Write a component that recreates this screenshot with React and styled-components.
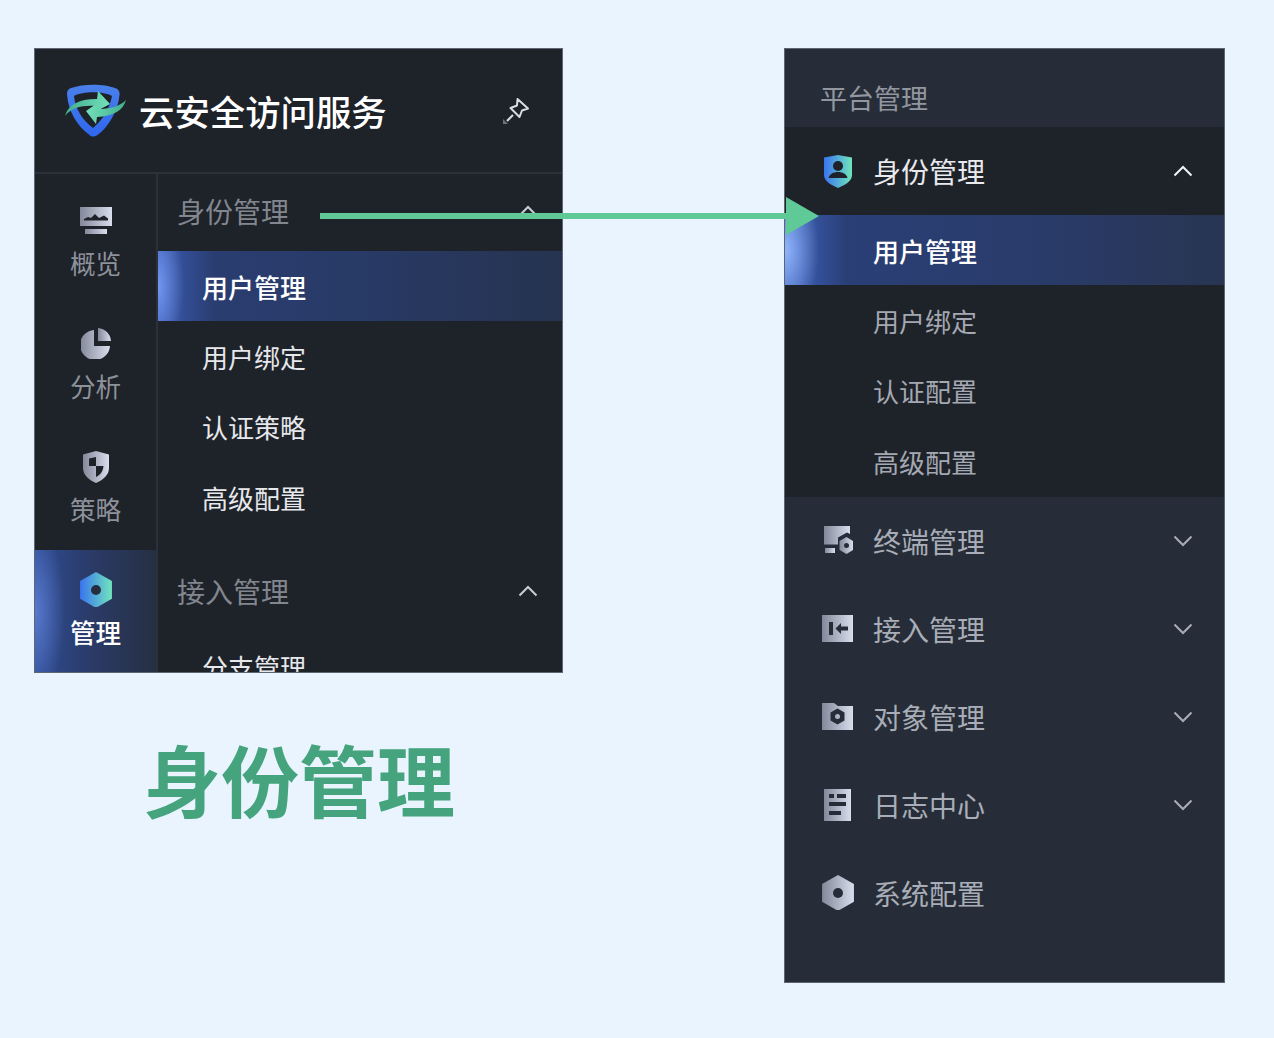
import React from 'react';
import styled, { createGlobalStyle } from 'styled-components';

const GlobalStyle = createGlobalStyle`
  html, body { margin: 0; padding: 0; }
  body {
    background: #e9f4ff;
    font-family: "Noto Sans CJK SC", "Noto Sans", sans-serif;
  }
`;

const Page = styled.div`
  position: relative;
  width: 1274px;
  height: 1038px;
  padding: 48px 49px 0 34px;
  box-sizing: border-box;
  display: flex;
  justify-content: space-between;
  align-items: flex-start;
  overflow: hidden;
  background: #e9f4ff;
`;

const LeftColumn = styled.div`
  width: 529px;
  display: flex;
  flex-direction: column;
`;

const Panel = styled.div`
  height: 625px;
  box-sizing: border-box;
  border: 1px solid #5d6672;
  background: #1e2229;
  display: flex;
  flex-direction: column;
  overflow: hidden;
`;

const Brand = styled.div`
  height: 123px;
  flex: none;
  display: flex;
  align-items: center;
  padding: 0 32px 0 30px;
  border-bottom: 2px solid #2b303b;
`;

const BrandName = styled.div`
  margin-left: 12px;
  margin-top: 0;
  flex: 1;
  font-size: 35.4px;
  line-height: 48px;
  font-weight: 500;
  color: #fff;
  white-space: nowrap;
`;

const PanelBody = styled.div`
  flex: 1;
  min-height: 0;
  display: flex;
`;

const Rail = styled.div`
  width: 121px;
  flex: none;
  padding-top: 7px;
  border-right: 2px solid #2b303b;
`;

const RailItem = styled.div`
  height: 123px;
  box-sizing: border-box;
  padding-top: 23px;
  display: flex;
  flex-direction: column;
  align-items: center;
  color: ${({ $active }) => ($active ? '#fff' : '#8d919a')};
  background: ${({ $active }) =>
    $active
      ? 'radial-gradient(ellipse 30px 90px at 0 50%, rgba(120,160,255,.55), transparent), linear-gradient(90deg, #2f4c96 0%, #2a3b68 45%, #262f42 100%)'
      : 'none'};
`;

const RailIcon = styled.div`
  height: 33px;
  display: flex;
  align-items: center;
  justify-content: center;
`;

const RailLabel = styled.div`
  margin-top: 9px;
  font-size: 25.6px;
  line-height: 34px;
  font-weight: ${({ $active }) => ($active ? 500 : 400)};
`;

const SubColumn = styled.div`
  flex: 1;
  min-width: 0;
`;

const SectionRow = styled.div`
  height: 77px;
  box-sizing: border-box;
  margin-top: ${({ $gap }) => $gap || 0}px;
  padding: 0 24px 4px 19px;
  display: flex;
  align-items: center;
  justify-content: space-between;
  font-size: 28px;
  color: #82868f;
`;

const SubRow = styled.div`
  height: 70.4px;
  box-sizing: border-box;
  padding-left: ${({ $inset }) => $inset}px;
  display: flex;
  align-items: center;
  font-size: 26px;
  font-weight: ${({ $active }) => ($active ? 500 : 400)};
  color: ${({ $active, $dim }) => ($active ? '#fff' : $dim ? '#a4a8b2' : '#e6e8ec')};
  background: ${({ $active, $soft }) =>
    !$active
      ? 'none'
      : $soft
        ? 'radial-gradient(ellipse 26px 70px at 0 50%, rgba(130,165,255,.8), transparent), linear-gradient(90deg, #3a5cb4 0%, #2a3d70 14%, #283a66 50%, #263350 100%)'
        : 'radial-gradient(ellipse 34px 70px at 0 50%, rgba(150,185,255,.95), transparent), linear-gradient(90deg, #3e63c0 0%, #2a3f76 14%, #293b69 60%, #283552 100%)'};
`;

const BigTitle = styled.div`
  margin-top: 60px;
  text-align: center;
  padding-right: 0;
  padding-left: 1px;
  font-size: 78px;
  line-height: 90px;
  font-weight: 700;
  color: #45a47d;
`;

const NavPanel = styled.div`
  width: 441px;
  height: 935px;
  box-sizing: border-box;
  border: 1px solid #5d6672;
  background: #262d38;
  display: flex;
  flex-direction: column;
`;

const NavTitle = styled.div`
  height: 78px;
  flex: none;
  box-sizing: border-box;
  padding: 21px 0 0 35px;
  font-size: 27px;
  line-height: 56px;
  color: #92969f;
`;

const OpenGroup = styled.div`
  background: #1e2229;
`;

const NavRow = styled.div`
  height: 88px;
  box-sizing: border-box;
  padding: 0 31px 0 36px;
  display: flex;
  align-items: center;
  font-size: 28px;
  color: ${({ $open }) => ($open ? '#e8eaee' : '#a9adb7')};
`;

const NavIcon = styled.div`
  width: 33px;
  flex: none;
  margin-right: 19px;
  display: flex;
  justify-content: center;
`;

const NavText = styled.div`
  flex: 1;
`;

const ArrowLine = styled.div`
  position: absolute;
  left: 320px;
  top: 213px;
  width: 470px;
  height: 6px;
  background: #60c998;
`;

const ArrowHead = styled.div`
  position: absolute;
  left: 786px;
  top: 197px;
  width: 0;
  height: 0;
  border-left: 33px solid #60c998;
  border-top: 19px solid transparent;
  border-bottom: 19px solid transparent;
`;

const HiddenDefs = styled.svg`
  position: absolute;
  width: 0;
  height: 0;
`;

const Chevron = ({ up, color = '#a9adb7' }) => (
  <svg width="20" height="12" viewBox="0 0 20 12" fill="none" stroke={color} strokeWidth="2">
    <path d={up ? 'M1.5 10.5 10 2l8.5 8.5' : 'M1.5 1.5 10 10l8.5-8.5'} />
  </svg>
);

const LogoMark = () => (
  <svg width="62" height="53" viewBox="0 0 62 53">
    <defs>
      <linearGradient id="logoBlue" x1="0" y1="0" x2="0" y2="1">
        <stop offset="0" stopColor="#4a80ea" />
        <stop offset="1" stopColor="#2f67ee" />
      </linearGradient>
      <linearGradient id="logoGreen" x1="0" y1="0" x2="1" y2="0">
        <stop offset="0" stopColor="#3fae8c" />
        <stop offset="1" stopColor="#74e0bb" />
      </linearGradient>
      <linearGradient id="logoGreen2" x1="1" y1="0" x2="0" y2="0">
        <stop offset="0" stopColor="#3fae8c" />
        <stop offset="1" stopColor="#74e0bb" />
      </linearGradient>
    </defs>
    <path
      fillRule="evenodd"
      fill="url(#logoBlue)"
      d="M2 10C2 7 3 5 6 4 18-.5 39-.5 50 4c3 1 5 3 4.500 7-1.500 16-11 32-22 40-3 2-6 2-8 0C12 42 3 27 2 10zM9 12c1 12 8 24 19 32 9-7 17-20 19-32C38 7 18 7 9 12z"
    />
    <path
      fill="url(#logoGreen)"
      d="M0 32C3 21 13 15 32 15l1-8 12 13-15 8 1-6C18 21 7 23 0 32z"
    />
    <path
      fill="url(#logoGreen2)"
      d="M61 16c-3 11-13 16-29 17l-1 7-10-13 13-9-1 7c11 0 21-2 28-9z"
    />
  </svg>
);

const PinIcon = () => (
  <svg width="28" height="28" viewBox="0 0 28 28" fill="none">
    <path d="M15.500 2 26 11.500l-6 2-2.500 6.500-9-9 6.500-2.500z" stroke="#d9dce3" strokeWidth="2" strokeLinejoin="round" />
    <path d="M5 24l6-6" stroke="#d9dce3" strokeWidth="2" />
    <path d="M1 27v-5l5 5z" fill="#6e727c" />
  </svg>
);

const OverviewIcon = () => (
  <svg width="32" height="27" viewBox="0 0 32 27">
    <path
      fillRule="evenodd"
      fill="url(#grey)"
      d="M0 0h32v19H0zM4 13.500h24v-2l-4-3-5 2.500-4-4-4 4-3-1-4 2z"
    />
    <path fill="url(#grey)" d="M5 22h22v5H5z" />
  </svg>
);

const PieIcon = () => (
  <svg width="30" height="31" viewBox="0 0 30 31">
    <path fill="url(#grey)" d="M13 2v16h16A15 15 0 1 1 13 2z" />
    <path fill="url(#grey)" d="M17 0a14 14 0 0 1 13 13H17z" />
  </svg>
);

const ShieldIcon = () => (
  <svg width="28" height="32" viewBox="0 0 28 32">
    <path
      fillRule="evenodd"
      fill="url(#grey)"
      d="M14 0l13 3.500V17c0 7-6 12-13 15C7 29 1 24 1 17V3.500zM14 6 7 7.500V15h7zM14 15v11c4-2 7-5 7.500-11z"
    />
  </svg>
);

const HexIcon = ({ fill, size = 32, hole = '#262d3f' }) => (
  <svg width={size} height={size * 1.12} viewBox="0 0 32 36">
    <path fill={fill} d="M16 0l16 9v18l-16 9-16-9V9z" />
    <circle cx="16" cy="18" r="5" fill={hole} />
  </svg>
);

const IdentityIcon = () => (
  <svg width="28" height="33" viewBox="0 0 28 33">
    <path fill="url(#brand)" d="M14 0l14 2.500V20c0 6-7 10-14 13C7 30 0 26 0 20V2.500z" />
    <circle cx="14" cy="11" r="5" fill="#1e2229" />
    <path fill="#1e2229" d="M4.500 23c1-4 5-6 9.500-6s8.500 2 9.500 6z" />
  </svg>
);

const DeviceIcon = () => (
  <svg width="31" height="29" viewBox="0 0 31 29">
    <path fill="url(#grey)" d="M2 0h26v8l-3-1.500-9 5v7H2z" />
    <path fill="url(#grey)" d="M3 22h10v5H3z" />
    <path fill="url(#grey)" fillRule="evenodd" d="M24.500 11l6.500 4v9l-6.500 4-7-4v-9zM24.500 17a2.500 2.500 0 1 0 0 5 2.500 2.500 0 0 0 0-5z" />
  </svg>
);

const EntryIcon = () => (
  <svg width="32" height="27" viewBox="0 0 32 27">
    <path
      fillRule="evenodd"
      fill="url(#grey)"
      d="M0 0h31v27H0zM7 7v13h4V7zM13.500 13.500 19 19v-3.500h7v-4h-7V8z"
    />
  </svg>
);

const ObjectIcon = () => (
  <svg width="32" height="27" viewBox="0 0 32 27">
    <path
      fillRule="evenodd"
      fill="url(#grey)"
      d="M0 0h12l4 3h15v24H0zM15.500 5.500 8.500 9.500v8l7 4 7-4v-8zM15.500 11a2.500 2.500 0 1 1 0 5 2.500 2.500 0 0 1 0-5z"
    />
  </svg>
);

const LogIcon = () => (
  <svg width="27" height="32" viewBox="0 0 27 32">
    <path
      fillRule="evenodd"
      fill="url(#grey)"
      d="M0 0h27v32H0zM5 5v4h5V5zM13 5v4h9V5zM5 13v4h17v-4zM5 22v4h12v-4z"
    />
  </svg>
);

const subItems = ['用户管理', '用户绑定', '认证策略', '高级配置'];
const navSubItems = ['用户管理', '用户绑定', '认证配置', '高级配置'];

const railItems = [
  { label: '概览', icon: <OverviewIcon /> },
  { label: '分析', icon: <PieIcon /> },
  { label: '策略', icon: <ShieldIcon /> },
  { label: '管理', icon: <HexIcon fill="url(#brand)" />, active: true },
];

const navItems = [
  { label: '终端管理', icon: <DeviceIcon />, more: true },
  { label: '接入管理', icon: <EntryIcon />, more: true },
  { label: '对象管理', icon: <ObjectIcon />, more: true },
  { label: '日志中心', icon: <LogIcon />, more: true },
  { label: '系统配置', icon: <HexIcon fill="url(#grey)" hole="#262d38" /> },
];

const App = () => (
  <>
    <GlobalStyle />
    <HiddenDefs aria-hidden="true">
      <defs>
        <linearGradient id="grey" x1="0" y1="0" x2="1" y2="0">
          <stop offset="0" stopColor="#83889a" />
          <stop offset="1" stopColor="#d8deec" />
        </linearGradient>
        <linearGradient id="brand" x1="0" y1="0" x2="1" y2="0">
          <stop offset="0" stopColor="#3a74f0" />
          <stop offset="1" stopColor="#6fe5bd" />
        </linearGradient>
      </defs>
    </HiddenDefs>
    <Page>
      <LeftColumn>
        <Panel>
          <Brand>
            <LogoMark />
            <BrandName>云安全访问服务</BrandName>
            <PinIcon />
          </Brand>
          <PanelBody>
            <Rail>
              {railItems.map((item) => (
                <RailItem key={item.label} $active={item.active}>
                  <RailIcon>{item.icon}</RailIcon>
                  <RailLabel $active={item.active}>{item.label}</RailLabel>
                </RailItem>
              ))}
            </Rail>
            <SubColumn>
              <SectionRow>
                身份管理
                <Chevron up color="#c9ccd3" />
              </SectionRow>
              {subItems.map((label, index) => (
                <SubRow key={label} $inset={44} $active={index === 0} $soft>
                  {label}
                </SubRow>
              ))}
              <SectionRow $gap={22}>
                接入管理
                <Chevron up color="#c9ccd3" />
              </SectionRow>
              <SubRow $inset={44}>分支管理</SubRow>
            </SubColumn>
          </PanelBody>
        </Panel>
        <BigTitle>身份管理</BigTitle>
      </LeftColumn>

      <NavPanel>
        <NavTitle>平台管理</NavTitle>
        <OpenGroup>
          <NavRow $open>
            <NavIcon>
              <IdentityIcon />
            </NavIcon>
            <NavText>身份管理</NavText>
            <Chevron up color="#f2f3f5" />
          </NavRow>
          {navSubItems.map((label, index) => (
            <SubRow key={label} $inset={88} $active={index === 0} $dim>
              {label}
            </SubRow>
          ))}
        </OpenGroup>
        {navItems.map((item) => (
          <NavRow key={item.label}>
            <NavIcon>{item.icon}</NavIcon>
            <NavText>{item.label}</NavText>
            {item.more && <Chevron />}
          </NavRow>
        ))}
      </NavPanel>

      <ArrowLine />
      <ArrowHead />
    </Page>
  </>
);

export default App;
